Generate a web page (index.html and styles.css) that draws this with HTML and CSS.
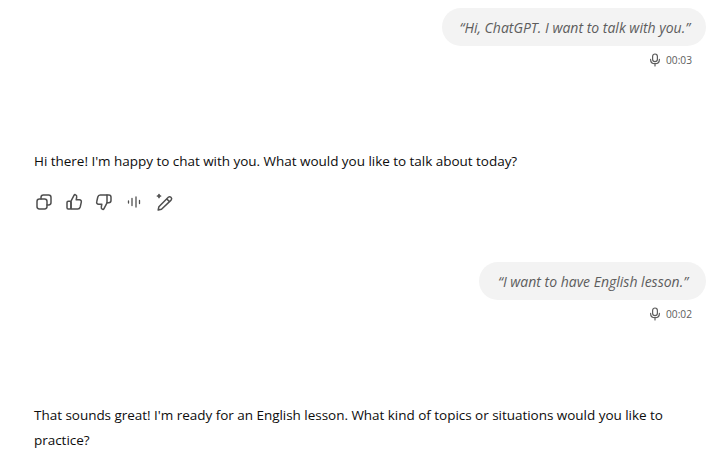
FILE: index.html
```html
<!DOCTYPE html>
<html lang="en">
<head>
<meta charset="utf-8">
<title>ChatGPT voice chat</title>
<link rel="stylesheet" href="styles.css">
</head>
<body>
<main class="chat">
  <section class="user">
    <div class="bubble">“Hi, ChatGPT. I want to talk with you.”</div>
    <div class="meta">
      <svg class="mic" viewBox="0 0 12 14"><rect x="3.6" y="1" width="4.8" height="7.6" rx="2.4"/><path d="M1.6 6.4c0 2.7 1.9 4.300 4.400 4.300s4.400-1.600 4.400-4.300M6 10.700v2.300"/></svg>
      <span>00:03</span>
    </div>
  </section>
  <section class="assistant one">
    <p class="reply">Hi there! I'm happy to chat with you. What would you like to talk about today?</p>
    <div class="actions">
      <svg class="icon" viewBox="0 0 20 20"><rect x="3" y="7" width="10" height="10" rx="2.4"/><path d="M7 7V5.4A2.4 2.4 0 0 1 9.4 3h5.2A2.4 2.4 0 0 1 17 5.4v5.2a2.4 2.4 0 0 1-2.4 2.4H13"/></svg>
      <svg class="icon" viewBox="0 0 20 20"><path d="M7 9.200 10 3.400c.3-.6.8-.9 1.400-.7 1 .3 1.500 1.200 1.300 2.300L12.200 7.800h3.300c1.300 0 2.100 1.100 1.800 2.300l-1.100 4.900c-.3 1.200-1.200 2-2.500 2H7z"/><rect x="3" y="9.200" width="4" height="7.800" rx="1.200"/></svg>
      <svg class="icon" viewBox="0 0 20 20"><path d="M13 10.800 10 16.600c-.3.6-.8.900-1.400.7-1-.3-1.500-1.200-1.300-2.300l.5-2.800H4.500c-1.300 0-2.100-1.100-1.800-2.300L3.800 5c.3-1.200 1.200-2 2.500-2H13z"/><path d="M13 3h1.800C16 3 17 4 17 5.200v3.400c0 1.200-1 2.200-2.200 2.200H13"/></svg>
      <svg class="icon wave" viewBox="0 0 20 20"><path d="M4.500 9v2M8 6.500v7M12 5v10M15.500 8.500v3"/></svg>
      <svg class="icon" viewBox="0 0 20 20"><path d="M7.500 17.200 4.200 18l.7-3.300L14.300 5.300a1.900 1.900 0 0 1 2.600 0l.2.200a1.900 1.900 0 0 1 0 2.600zM12.700 6.900l2.900 2.900"/><path class="spark" d="M5 2.500v3M3.500 4h3"/></svg>
    </div>
  </section>
  <section class="user second">
    <div class="bubble">“I want to have English lesson.”</div>
    <div class="meta">
      <svg class="mic" viewBox="0 0 12 14"><rect x="3.600" y="1" width="4.800" height="7.600" rx="2.400"/><path d="M1.600 6.400c0 2.700 1.900 4.300 4.400 4.300s4.400-1.600 4.400-4.300M6 10.700v2.300"/></svg>
      <span>00:02</span>
    </div>
  </section>
  <section class="assistant two">
    <p class="reply">That sounds great! I'm ready for an English lesson. What kind of topics or situations would you like to practice?</p>
  </section>
</main>
</body>
</html>
```
FILE: styles.css
```css
* { box-sizing: border-box; }
html, body { margin: 0; padding: 0; background: #fff; overflow: hidden; }
body { width: 726px; height: 459px; font-family: "Open Sans", "Noto Sans", sans-serif; color: #0d0d0d; }
.chat { display: flex; flex-direction: column; padding: 8px 20px 0 34px; }
.user { display: flex; flex-direction: column; align-items: flex-end; }
.bubble { height: 38px; padding: 10px 16px 0 18px; line-height: 20px; border-radius: 19px; background: #f3f3f3; font-size: 14px; font-style: italic; color: #5d5d5d; white-space: nowrap; }
.second .bubble { padding-right: 18px; padding-left: 19px; }
.meta { display: flex; align-items: center; gap: 5px; height: 18px; margin-top: 5px; padding-right: 14px; font-size: 10.2px; color: #5d5d5d; }
.mic { width: 12px; height: 14px; fill: none; stroke: #5d5d5d; stroke-width: 1.2; stroke-linecap: round; }
.reply { margin: 0; font-size: 13.5px; line-height: 25px; width: 650px; letter-spacing: -0.03px; }
.one { margin-top: 80px; }
.actions { display: flex; gap: 10px; margin-top: 18px; }
.icon { width: 20px; height: 20px; fill: none; stroke: #4f4f4f; stroke-width: 1.5; stroke-linecap: round; stroke-linejoin: round; }
.icon.wave { stroke-width: 1.3; }
.spark { stroke-width: 1.7; }
.second { margin-top: 50px; }
.two { margin-top: 80px; }
```
